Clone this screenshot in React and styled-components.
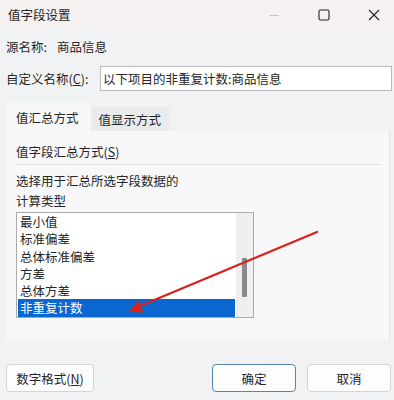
import styled, { createGlobalStyle } from "styled-components";

const GlobalStyle = createGlobalStyle`
  html, body {
    margin: 0;
    padding: 0;
    background: #f1f2f4;
  }
`;

const items = ["最小值", "标准偏差", "总体标准偏差", "方差", "总体方差", "非重复计数"];

export default function App() {
  return (
    <>
      <GlobalStyle />
      <Window>
        <TitleBar>
          <Title>值字段设置</Title>
          <Controls>
            <Control>
              <svg width="12" height="12" viewBox="0 0 12 12">
                <path d="M1 6.5h10" stroke="#c8c8c8" strokeWidth="1" />
              </svg>
            </Control>
            <Control>
              <svg width="12" height="12" viewBox="0 0 12 12">
                <rect x="1" y="1" width="10" height="10" rx="1.5" fill="none" stroke="#222" strokeWidth="1.1" />
              </svg>
            </Control>
            <Control>
              <svg width="12" height="12" viewBox="0 0 12 12">
                <path d="M1 1l10 10M11 1L1 11" stroke="#222" strokeWidth="1.1" />
              </svg>
            </Control>
          </Controls>
        </TitleBar>

        <SourceRow>
          源名称:<SourceName>商品信息</SourceName>
        </SourceRow>

        <NameRow>
          <Label>
            自定义名称(<u>C</u>):
          </Label>
          <NameInput defaultValue="以下项目的非重复计数:商品信息" />
        </NameRow>

        <Tabs>
          <Tab $active>值汇总方式</Tab>
          <Tab>值显示方式</Tab>
        </Tabs>

        <Panel>
          <GroupTitle>
            值字段汇总方式(<u>S</u>)
          </GroupTitle>
          <Separator />
          <Description>
            选择用于汇总所选字段数据的
            <br />
            计算类型
          </Description>
          <ListBox>
            <List>
              {items.map((item, i) => (
                <Item key={item} $selected={i === items.length - 1}>
                  {item}
                </Item>
              ))}
            </List>
            <ScrollTrack>
              <Thumb />
            </ScrollTrack>
          </ListBox>
        </Panel>

        <Footer>
          <Button $width="88px">
            数字格式(<u>N</u>)
          </Button>
          <Spacer />
          <Button $primary>确定</Button>
          <Button>取消</Button>
        </Footer>

        <Arrow width="394" height="400" viewBox="0 0 394 400">
          <line x1="317" y1="232" x2="140" y2="306" stroke="#d8231c" strokeWidth="2.4" strokeLinecap="round" />
          <polygon points="128,312 143.5,312.5 138.5,300.5" fill="#d8231c" />
        </Arrow>
      </Window>
    </>
  );
}

const Window = styled.div`
  position: relative;
  width: 394px;
  height: 400px;
  display: flex;
  flex-direction: column;
  background: #f1f2f4;
  font-family: "Noto Sans CJK SC", "Noto Sans", sans-serif;
  font-size: 12.5px;
  color: #262626;
  overflow: hidden;
`;

const TitleBar = styled.div`
  height: 30px;
  display: flex;
  align-items: center;
  padding-left: 8px;
  background: #f4f1f0;
`;

const Title = styled.div`
  flex: 1;
  line-height: 1;
`;

const Controls = styled.div`
  display: flex;
  align-items: center;
  gap: 38px;
  padding-right: 14px;
`;

const Control = styled.div`
  width: 12px;
  height: 12px;
  display: flex;
`;

const SourceRow = styled.div`
  margin-top: 6px;
  height: 22px;
  line-height: 22px;
  padding-left: 6px;
`;

const SourceName = styled.span`
  margin-left: 10px;
`;

const NameRow = styled.div`
  margin-top: 8px;
  display: flex;
  align-items: center;
  padding: 0 2px 0 6px;
`;

const Label = styled.label`
  width: 94px;
  white-space: nowrap;
`;

const NameInput = styled.input`
  flex: 1;
  height: 25px;
  box-sizing: border-box;
  border: 1px solid #b9b9b9;
  background: #fff;
  padding: 0 2px;
  font: inherit;
  color: #262626;
  outline: none;
`;

const Tabs = styled.div`
  margin-top: 12px;
  display: flex;
  align-items: flex-end;
  padding-left: 6px;
  height: 28px;
`;

const Tab = styled.div`
  height: ${(p) => (p.$active ? "28px" : "24px")};
  box-sizing: border-box;
  display: flex;
  align-items: center;
  padding: ${(p) => (p.$active ? "0 12px 0 10px" : "0 8px")};
  background: ${(p) => (p.$active ? "#f8f8fa" : "#eaebed")};
`;

const Panel = styled.div`
  margin: 0 4px 0 6px;
  height: 209px;
  box-sizing: border-box;
  background: #f8f8fa;
  border-right: 1px solid #e4e5e7;
  padding: 0 8px 0 10px;
  display: flex;
  flex-direction: column;
`;

const GroupTitle = styled.div`
  margin-top: 12px;
  line-height: 18px;
`;

const Separator = styled.div`
  margin-top: 3px;
  height: 1px;
  background: #e2e3e5;
`;

const Description = styled.div`
  margin-top: 6px;
  line-height: 20px;
`;

const ListBox = styled.div`
  margin-top: 1px;
  width: 238px;
  height: 106px;
  box-sizing: border-box;
  border: 1px solid #ababab;
  background: #fff;
  display: flex;
`;

const List = styled.div`
  flex: 1;
  padding: 0 1px;
`;

const Item = styled.div`
  height: 17.3px;
  line-height: 17.3px;
  padding-left: 2px;
  background: ${(p) => (p.$selected ? "#0a66d1" : "transparent")};
  color: ${(p) => (p.$selected ? "#fff" : "#262626")};
`;

const ScrollTrack = styled.div`
  width: 17px;
  background: #efeff1;
  display: flex;
  justify-content: center;
  padding-top: 45px;
`;

const Thumb = styled.div`
  width: 5px;
  height: 39px;
  border-radius: 1px;
  background: #8a8a8a;
`;

const Footer = styled.div`
  margin-top: 24px;
  display: flex;
  gap: 11px;
  padding: 0 3px 0 6px;
`;

const Spacer = styled.div`
  flex: 1;
`;

const Button = styled.button`
  width: ${(p) => p.$width || "84px"};
  height: 28px;
  box-sizing: border-box;
  border: 1px solid ${(p) => (p.$primary ? "#5a83aa" : "#d3d4d6")};
  border-radius: 4px;
  background: #fdfdfd;
  font: inherit;
  color: #262626;
  padding: 0;
`;

const Arrow = styled.svg`
  position: absolute;
  inset: 0;
  pointer-events: none;
`;
